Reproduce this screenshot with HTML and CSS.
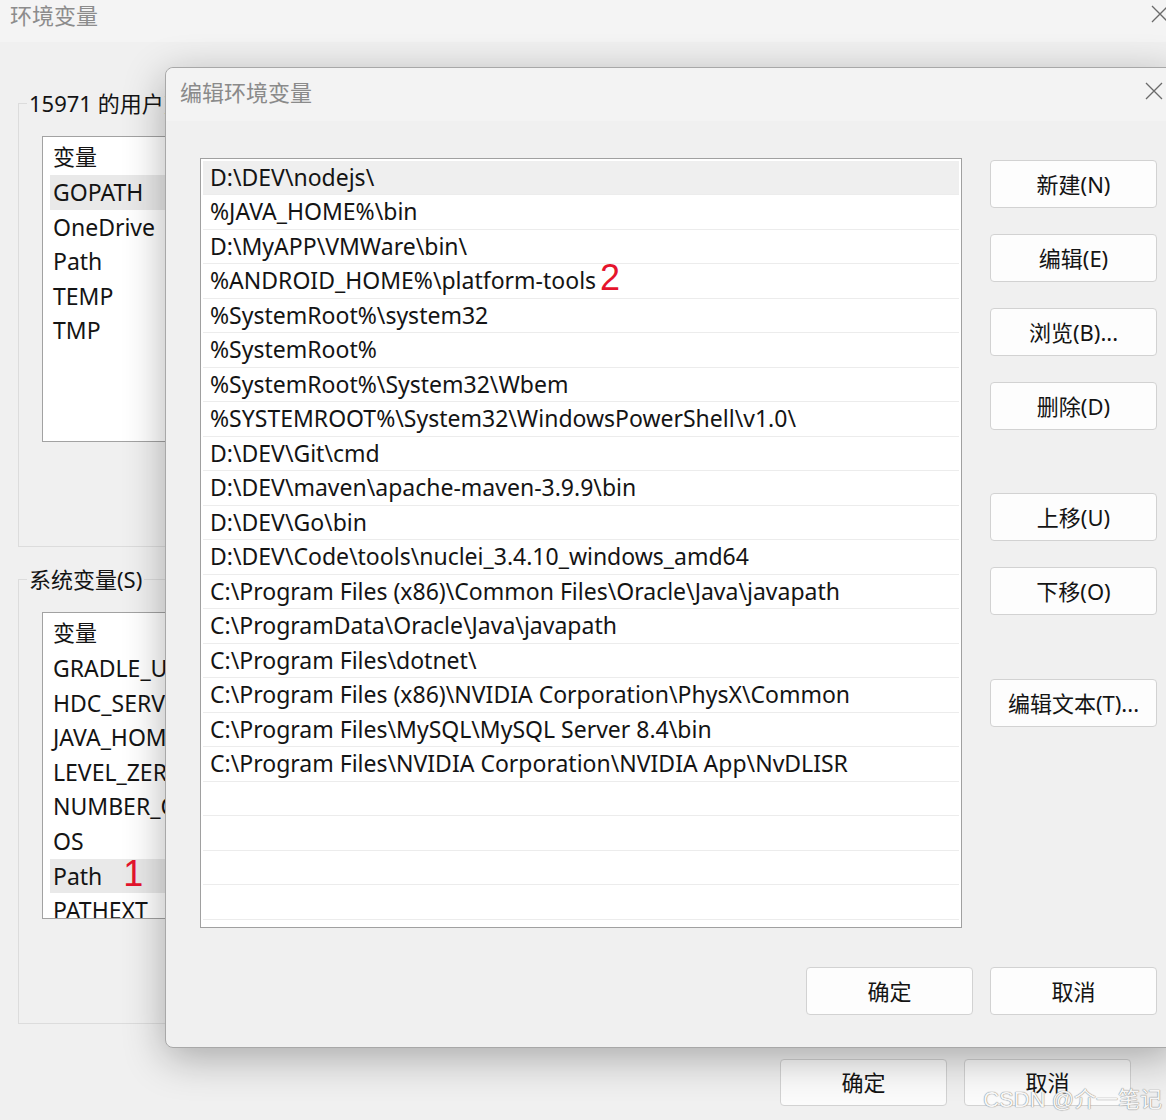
FILE: index.html
```html
<!DOCTYPE html>
<html lang="zh-CN">
<head>
<meta charset="utf-8">
<title>环境变量</title>
<link rel="stylesheet" href="styles.css">
</head>
<body>
<div class="bgwin">
  <div class="bg-title">
    <span class="t">环境变量</span>
    <svg class="xicon" width="20" height="20" viewBox="0 0 20 20"><path d="M2 2L18 18M18 2L2 18" stroke="#6a6a6a" stroke-width="1.3" fill="none"/></svg>
  </div>
  <div class="bg-body">
    <div class="groups">
      <fieldset class="group">
        <legend>15971 的用户变量(U)</legend>
        <div class="lb lb-user">
          <div class="lhead">变量</div>
          <div class="lrow sel">GOPATH</div>
          <div class="lrow">OneDrive</div>
          <div class="lrow">Path</div>
          <div class="lrow">TEMP</div>
          <div class="lrow">TMP</div>
        </div>
      </fieldset>
      <fieldset class="group g-sys">
        <legend>系统变量(S)</legend>
        <div class="lb lb-sys">
          <div class="lhead">变量</div>
          <div class="lrow">GRADLE_USER_HOME</div>
          <div class="lrow">HDC_SERVER_PORT</div>
          <div class="lrow">JAVA_HOME</div>
          <div class="lrow">LEVEL_ZERO</div>
          <div class="lrow">NUMBER_OF_PROCESSORS</div>
          <div class="lrow">OS</div>
          <div class="lrow sel">Path<span class="mark m1">1</span></div>
          <div class="lrow">PATHEXT</div>
        </div>
      </fieldset>
    </div>
    <div class="bg-buttons">
      <div class="btn btn-bg">确定</div>
      <div class="btn btn-bg">取消</div>
    </div>
  </div>
</div>

<div class="dlg">
  <div class="dlg-title">
    <span class="t">编辑环境变量</span>
    <svg class="xicon" width="20" height="20" viewBox="0 0 20 20"><path d="M2 2L18 18M18 2L2 18" stroke="#6a6a6a" stroke-width="1.3" fill="none"/></svg>
  </div>
  <div class="dlg-body">
    <div class="plist">
      <div class="prow sel">D:\DEV\nodejs\</div>
      <div class="prow">%JAVA_HOME%\bin</div>
      <div class="prow">D:\MyAPP\VMWare\bin\</div>
      <div class="prow">%ANDROID_HOME%\platform-tools<span class="mark m2">2</span></div>
      <div class="prow">%SystemRoot%\system32</div>
      <div class="prow">%SystemRoot%</div>
      <div class="prow">%SystemRoot%\System32\Wbem</div>
      <div class="prow">%SYSTEMROOT%\System32\WindowsPowerShell\v1.0\</div>
      <div class="prow">D:\DEV\Git\cmd</div>
      <div class="prow">D:\DEV\maven\apache-maven-3.9.9\bin</div>
      <div class="prow">D:\DEV\Go\bin</div>
      <div class="prow">D:\DEV\Code\tools\nuclei_3.4.10_windows_amd64</div>
      <div class="prow">C:\Program Files (x86)\Common Files\Oracle\Java\javapath</div>
      <div class="prow">C:\ProgramData\Oracle\Java\javapath</div>
      <div class="prow">C:\Program Files\dotnet\</div>
      <div class="prow">C:\Program Files (x86)\NVIDIA Corporation\PhysX\Common</div>
      <div class="prow">C:\Program Files\MySQL\MySQL Server 8.4\bin</div>
      <div class="prow">C:\Program Files\NVIDIA Corporation\NVIDIA App\NvDLISR</div>
      <div class="prow"></div>
      <div class="prow"></div>
      <div class="prow"></div>
      <div class="prow"></div>
      <div class="prow"></div>
    </div>
    <div class="btncol">
      <div class="btn">新建(N)</div>
      <div class="btn">编辑(E)</div>
      <div class="btn">浏览(B)...</div>
      <div class="btn">删除(D)</div>
      <div class="btn gap-lg">上移(U)</div>
      <div class="btn">下移(O)</div>
      <div class="btn gap-lg2">编辑文本(T)...</div>
    </div>
  </div>
  <div class="dlg-foot">
    <div class="btn">确定</div>
    <div class="btn">取消</div>
  </div>
</div>

<div class="watermark">CSDN @介一笔记</div>
</body>
</html>
```

FILE: styles.css
```css
* { box-sizing: border-box; }
html, body { margin: 0; padding: 0; }
body {
  width: 1166px;
  height: 1120px;
  overflow: hidden;
  position: relative;
  background: #f0f0f0;
  font-family: "Noto Sans", "Noto Sans CJK SC", sans-serif;
  font-size: 22px;
  color: #141414;
}

.bg-title {
  height: 42px;
  background: #f4f4f4;
  display: flex;
  align-items: center;
  justify-content: space-between;
  padding-left: 10px;
  padding-bottom: 14px;
}
.bg-title .t { color: #8c8c8c; }
.bg-title .xicon { margin-right: -4px; }

.bg-body { padding: 46px 0 0; }

/* only the part left of the dialog is visible */
.groups {
  width: 166px;
  overflow: hidden;
  padding-left: 18px;
}
.group {
  width: 1130px;
  margin: 0;
  padding: 0;
  border: 1px solid #dcdcdc;
  min-width: 0;
}
.group legend {
  margin-left: 8px;
  padding: 0 2px;
  height: 30px;
  line-height: 30px;
  white-space: nowrap;
}
.g-sys { margin-top: 17px; }

.lb {
  margin: 18px 23px 104px 23px;
  background: #fff;
  border: 1px solid #a2a2a2;
  overflow: hidden;
  padding-left: 7px;
}
.lb-user { height: 306px; }
.lb-sys { height: 307px; }
.lhead {
  height: 38px;
  line-height: 38px;
  padding-left: 3px;
}
.lrow {
  height: 34.6px;
  line-height: 34.6px;
  padding-left: 3px;
  font-size: 23px;
  white-space: nowrap;
}
.lrow.sel { background: #e9e9e9; }

.mark {
  color: #e5142c;
  font-family: "Liberation Sans", sans-serif;
  font-size: 36px;
  line-height: 0;
  vertical-align: -1px;
}
.m1 { margin-left: 21px; }
.m2 { margin-left: 4px; }

.bg-buttons {
  display: flex;
  justify-content: flex-end;
  gap: 17px;
  padding-right: 35px;
  margin-top: 35px;
}

.btn {
  width: 167px;
  height: 48px;
  background: #fdfdfd;
  border: 1px solid #d2d2d2;
  border-radius: 4px;
  display: flex;
  align-items: center;
  justify-content: center;
  padding-bottom: 3px;
  white-space: nowrap;
}
.btn-bg { height: 47px; background: #fbfbfb; }

.dlg {
  position: absolute;
  left: 165px;
  top: 67px;
  width: 1012px;
  height: 981px;
  background: #f0f0f0;
  border: 1px solid #a8a8a8;
  border-radius: 8px;
  box-shadow: 0 10px 42px rgba(0, 0, 0, 0.3);
}
.dlg-title {
  height: 53px;
  background: #f3f3f3;
  border-radius: 8px 8px 0 0;
  display: flex;
  align-items: center;
  justify-content: space-between;
  padding: 0 12px 7px 14px;
}
.dlg-title .t { color: #8a8a8a; }

.dlg-body {
  display: flex;
  padding: 37px 0 0 34px;
}
.plist {
  width: 762px;
  height: 770px;
  background: #fff;
  border: 1px solid #a0a0a0;
  padding: 1.5px 2px 0;
  overflow: hidden;
}
.prow {
  height: 34.5px;
  line-height: 33.5px;
  border-bottom: 1px solid #ececec;
  padding-left: 7px;
  font-size: 23px;
  white-space: nowrap;
}
.prow.sel { background: #efefef; }

.btncol {
  margin-left: 28px;
  display: flex;
  flex-direction: column;
  padding-top: 2px;
  gap: 26px;
}
.btncol .gap-lg { margin-top: 37px; }
.btncol .gap-lg2 { margin-top: 38px; }

.dlg-foot {
  display: flex;
  justify-content: flex-end;
  gap: 17px;
  padding-right: 19px;
  margin-top: 39px;
}

.watermark {
  position: absolute;
  right: 4px;
  bottom: 7px;
  font-family: "Liberation Sans", "Noto Sans CJK SC", sans-serif;
  font-size: 22px;
  color: #f6f6f6;
  text-shadow: 0 0 1px #777, 0 0 1px #999;
  white-space: nowrap;
}
```
